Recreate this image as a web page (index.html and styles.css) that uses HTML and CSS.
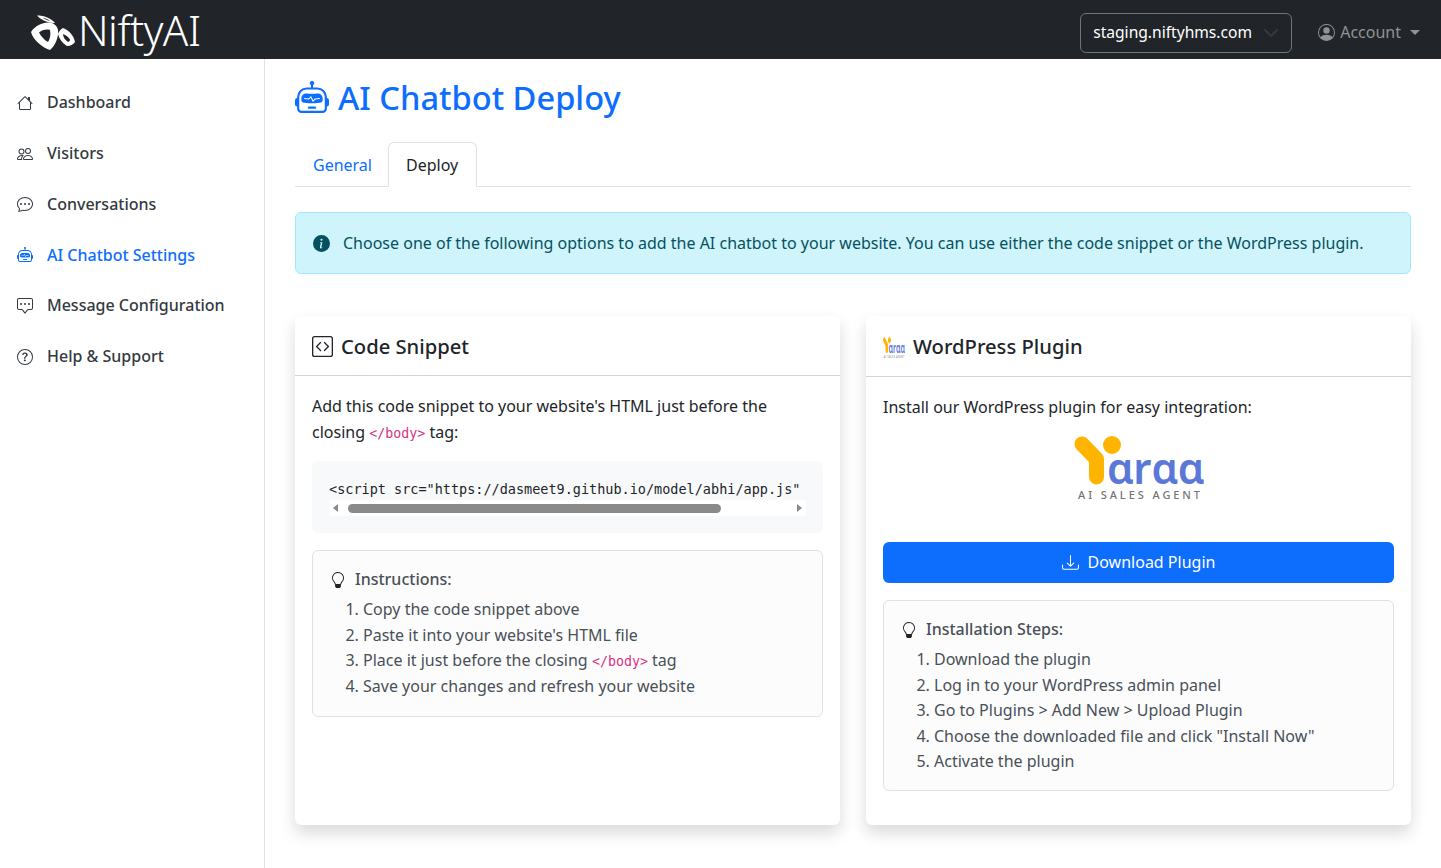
FILE: index.html
```html
<!DOCTYPE html>
<html>
<head>
    <title>AI Chatbot Deploy</title>
    <link rel="stylesheet" href="styles.css">
</head>
<body>
    <svg class="defs" width="0" height="0">
        <symbol id="i-robot" viewBox="0 0 16 16">
            <path d="M6 12.5a.5.5 0 0 1 .5-.5h3a.5.5 0 0 1 0 1h-3a.5.5 0 0 1-.5-.5ZM3 8.062C3 6.76 4.235 5.765 5.53 5.886a26.58 26.58 0 0 0 4.94 0C11.765 5.765 13 6.76 13 8.062v1.157a.933.933 0 0 1-.765.935c-.845.147-2.34.346-4.235.346-1.895 0-3.39-.2-4.235-.346A.933.933 0 0 1 3 9.219V8.062Zm4.542-.827a.25.25 0 0 0-.217.068l-.92.9a24.767 24.767 0 0 1-1.871-.183.25.25 0 0 0-.068.495c.55.076 1.232.149 2.02.193a.25.25 0 0 0 .189-.071l.754-.736.847 1.71a.25.25 0 0 0 .404.062l.932-.97a25.286 25.286 0 0 0 1.922-.188.25.25 0 0 0-.068-.495c-.538.074-1.207.145-1.98.189a.25.25 0 0 0-.166.076l-.754.785-.842-1.7a.25.25 0 0 0-.182-.135Z"/>
            <path d="M8.5 1.866a1 1 0 1 0-1 0V3h-2A4.5 4.5 0 0 0 1 7.5V8a1 1 0 0 0-1 1v2a1 1 0 0 0 1 1v1a2 2 0 0 0 2 2h10a2 2 0 0 0 2-2v-1a1 1 0 0 0 1-1V9a1 1 0 0 0-1-1v-.5A4.5 4.5 0 0 0 10.5 3h-2V1.866ZM14 7.5V13a1 1 0 0 1-1 1H3a1 1 0 0 1-1-1V7.5A3.5 3.5 0 0 1 5.5 4h5A3.5 3.5 0 0 1 14 7.5Z"/>
        </symbol>
        <symbol id="i-bulb" viewBox="0 0 16 16">
            <path d="M2 6a6 6 0 1 1 10.174 4.31c-.203.196-.359.4-.453.619l-.762 1.769A.5.5 0 0 1 10.5 13a.5.5 0 0 1 0 1 .5.5 0 0 1 0 1l-.224.447a1 1 0 0 1-.894.553H6.618a1 1 0 0 1-.894-.553L5.5 15a.5.5 0 0 1 0-1 .5.5 0 0 1 0-1 .5.5 0 0 1-.46-.302l-.761-1.77a1.964 1.964 0 0 0-.453-.618A5.984 5.984 0 0 1 2 6zm6-5a5 5 0 0 0-3.479 8.592c.263.254.514.564.676.941L5.83 12h4.342l.632-1.467c.162-.377.413-.687.676-.941A5 5 0 0 0 8 1z"/>
        </symbol>
    </svg>

    <nav class="navbar">
        <a class="brand" href="#">
            <svg class="brand-mark" viewBox="0 0 46 36">
                <path fill="#fff" fill-rule="evenodd" d="M1 17C5 11 12 7.500 18 7.500C23 7.500 27 10 28 15C29 22 25 31 20 35C13 33 3 25 1 17ZM9 17.500C11 21 14 25 18 27C20 24 21 19 20 15C16 14 12 15 9 17.500Z"/>
                <path fill="#fff" fill-rule="evenodd" d="M7 .500C14 .500 21 3 25 8C19 8 12 6 7 .500ZM13 2.800C15 4.500 18 5.600 20 6C18 4.400 15.500 3.200 13 2.800Z"/>
                <path fill="#fff" fill-rule="evenodd" d="M33 13C39 15 44 21 45 27C43 30 39 31.500 37 31C32 28 29 23 28 19C29 16 31 14 33 13ZM33 19C33 22 35 25 38 27C39.500 26.500 40 25.500 40 24.500C38.500 22 36 20 33 19Z"/>
            </svg>
            <span class="brand-name">NiftyAI</span>
        </a>
        <div class="nav-right">
            <div class="site-select">
                <span>staging.niftyhms.com</span>
                <svg class="select-arrow" viewBox="0 0 16 16"><path d="m2 5 6 6 6-6"/></svg>
            </div>
            <div class="account">
                <svg class="icon" viewBox="0 0 16 16"><path d="M11 6a3 3 0 1 1-6 0 3 3 0 0 1 6 0z"/><path fill-rule="evenodd" d="M0 8a8 8 0 1 1 16 0A8 8 0 0 1 0 8zm8-7a7 7 0 0 0-5.468 11.37C3.242 11.226 4.805 10 8 10s4.757 1.225 5.468 2.37A7 7 0 0 0 8 1z"/></svg>
                <span>Account</span>
                <i class="caret"></i>
            </div>
        </div>
    </nav>

    <div class="layout">
        <aside class="sidebar">
            <a class="side-link" href="#">
                <svg class="icon" viewBox="0 0 16 16"><path d="M8.707 1.5a1 1 0 0 0-1.414 0L.646 8.146a.5.5 0 0 0 .708.708L2 8.207V13.500A1.500 1.500 0 0 0 3.500 15h9a1.500 1.500 0 0 0 1.500-1.500V8.207l.646.647a.5.5 0 0 0 .708-.708L13 5.793V2.500a.5.5 0 0 0-.5-.5h-1a.5.5 0 0 0-.5.5v1.293L8.707 1.500ZM13 7.207V13.500a.5.5 0 0 1-.5.5h-9a.5.5 0 0 1-.5-.5V7.207l5-5 5 5Z"/></svg>
                Dashboard
            </a>
            <a class="side-link" href="#">
                <svg class="icon" viewBox="0 0 16 16"><path d="M15 14s1 0 1-1-1-4-5-4-5 3-5 4 1 1 1 1h8Zm-7.978-1A.261.261 0 0 1 7 12.996c.001-.264.167-1.030.76-1.720C8.312 10.629 9.282 10 11 10c1.717 0 2.687.630 3.240 1.276.593.690.758 1.457.760 1.720l-.008.002a.274.274 0 0 1-.014.002H7.022ZM11 7a2 2 0 1 0 0-4 2 2 0 0 0 0 4Zm3-2a3 3 0 1 1-6 0 3 3 0 0 1 6 0ZM6.936 9.280a5.880 5.880 0 0 0-1.230-.247A7.350 7.350 0 0 0 5 9c-4 0-5 3-5 4 0 .667.333 1 1 1h4.216A2.238 2.238 0 0 1 5 13c0-1.010.377-2.042 1.090-2.904.243-.294.526-.569.846-.816ZM4.920 10A5.493 5.493 0 0 0 4 13H1c0-.260.164-1.030.760-1.724.545-.636 1.492-1.256 3.160-1.275ZM1.500 5.500a3 3 0 1 1 6 0 3 3 0 0 1-6 0Zm3-2a2 2 0 1 0 0 4 2 2 0 0 0 0-4Z"/></svg>
                Visitors
            </a>
            <a class="side-link" href="#">
                <svg class="icon" viewBox="0 0 16 16"><path d="M5 8a1 1 0 1 1-2 0 1 1 0 0 1 2 0zm4 0a1 1 0 1 1-2 0 1 1 0 0 1 2 0zm3 1a1 1 0 1 0 0-2 1 1 0 0 0 0 2z"/><path d="m2.165 15.803.020-.004c1.830-.363 2.948-.842 3.468-1.105A9.060 9.060 0 0 0 8 15c4.418 0 8-3.134 8-7s-3.582-7-8-7-8 3.134-8 7c0 1.760.743 3.370 1.970 4.600a10.437 10.437 0 0 1-.524 2.318l-.003.011a10.722 10.722 0 0 1-.244.637c-.079.186.074.394.273.362a21.673 21.673 0 0 0 .693-.125zm.8-3.108a1 1 0 0 0-.287-.801C1.618 10.830 1 9.468 1 8c0-3.192 3.004-6 7-6s7 2.808 7 6c0 3.193-3.004 6-7 6a8.060 8.060 0 0 1-2.088-.272 1 1 0 0 0-.711.074c-.387.196-1.240.570-2.634.893a10.970 10.970 0 0 0 .398-2z"/></svg>
                Conversations
            </a>
            <a class="side-link active" href="#">
                <svg class="icon" viewBox="0 0 16 16"><use href="#i-robot"/></svg>
                AI Chatbot Settings
            </a>
            <a class="side-link" href="#">
                <svg class="icon" viewBox="0 0 16 16"><path d="M14 1a1 1 0 0 1 1 1v8a1 1 0 0 1-1 1h-2.500a2 2 0 0 0-1.600.800L8 14.333 6.100 11.800a2 2 0 0 0-1.600-.800H2a1 1 0 0 1-1-1V2a1 1 0 0 1 1-1h12zM2 0a2 2 0 0 0-2 2v8a2 2 0 0 0 2 2h2.500a1 1 0 0 1 .800.400l1.900 2.533a1 1 0 0 0 1.600 0l1.900-2.533a1 1 0 0 1 .800-.400H14a2 2 0 0 0 2-2V2a2 2 0 0 0-2-2H2z"/><path d="M5 6a1 1 0 1 1-2 0 1 1 0 0 1 2 0zm4 0a1 1 0 1 1-2 0 1 1 0 0 1 2 0zm4 0a1 1 0 1 1-2 0 1 1 0 0 1 2 0z"/></svg>
                Message Configuration
            </a>
            <a class="side-link" href="#">
                <svg class="icon" viewBox="0 0 16 16"><path d="M8 15A7 7 0 1 1 8 1a7 7 0 0 1 0 14zm0 1A8 8 0 1 0 8 0a8 8 0 0 0 0 16z"/><path d="M5.255 5.786a.237.237 0 0 0 .241.247h.825c.138 0 .248-.113.266-.250.090-.656.540-1.134 1.342-1.134.686 0 1.314.343 1.314 1.168 0 .635-.374.927-.965 1.371-.673.489-1.206 1.060-1.168 1.987l.003.217a.250.250 0 0 0 .250.246h.811a.250.250 0 0 0 .250-.250v-.105c0-.718.273-.927 1.010-1.486.609-.463 1.244-.977 1.244-2.056 0-1.511-1.276-2.241-2.673-2.241-1.267 0-2.655.590-2.750 2.286zm1.557 5.763c0 .533.425.927 1.010.927.609 0 1.028-.394 1.028-.927 0-.552-.420-.940-1.029-.940-.584 0-1.009.388-1.009.940z"/></svg>
                Help &amp; Support
            </a>
        </aside>

        <main class="content">
            <h1 class="page-title">
                <svg class="title-icon" viewBox="0 0 16 16"><use href="#i-robot"/></svg>
                AI Chatbot Deploy
            </h1>

            <div class="tabs">
                <a class="tab" href="#">General</a>
                <a class="tab active" href="#">Deploy</a>
            </div>

            <div class="alert">
                <svg class="icon alert-icon" viewBox="0 0 16 16"><path d="M8 16A8 8 0 1 0 8 0a8 8 0 0 0 0 16zm.930-9.412-1 4.705c-.070.340.029.533.304.533.194 0 .487-.070.686-.246l-.088.416c-.287.346-.920.598-1.465.598-.703 0-1.002-.422-.808-1.319l.738-3.468c.064-.293.006-.399-.287-.470l-.451-.081.082-.381 2.290-.287zM8 5.500a1 1 0 1 1 0-2 1 1 0 0 1 0 2z"/></svg>
                <span class="alert-text">Choose one of the following options to add the AI chatbot to your website. You can use either the code snippet or the WordPress plugin.</span>
            </div>

            <div class="cards">
                <section class="card">
                    <header class="card-head head-snippet">
                        <svg class="head-icon" viewBox="0 0 16 16"><path d="M14 1a1 1 0 0 1 1 1v12a1 1 0 0 1-1 1H2a1 1 0 0 1-1-1V2a1 1 0 0 1 1-1h12zM2 0a2 2 0 0 0-2 2v12a2 2 0 0 0 2 2h12a2 2 0 0 0 2-2V2a2 2 0 0 0-2-2H2z"/><path d="M6.854 4.646a.500.500 0 0 1 0 .708L4.207 8l2.647 2.646a.500.500 0 0 1-.708.708l-3-3a.500.500 0 0 1 0-.708l3-3a.500.500 0 0 1 .708 0zm2.292 0a.500.500 0 0 0 0 .708L11.793 8l-2.647 2.646a.500.500 0 0 0 .708.708l3-3a.500.500 0 0 0 0-.708l-3-3a.500.500 0 0 0-.708 0z"/></svg>
                        <h2>Code Snippet</h2>
                    </header>
                    <div class="card-body">
                        <p class="intro">Add this code snippet to your website's HTML just before the closing <code>&lt;/body&gt;</code> tag:</p>
                        <div class="code-box">
                            <pre class="code-line">&lt;script src="https://dasmeet9.github.io/model/abhi/app.js"</pre>
                            <div class="scroll-bar">
                                <i class="arrow-left"></i>
                                <div class="scroll-track"><div class="scroll-thumb"></div></div>
                                <i class="arrow-right"></i>
                            </div>
                        </div>
                        <div class="note">
                            <div class="note-title">
                                <svg class="bulb" viewBox="0 0 16 16"><use href="#i-bulb"/></svg>
                                Instructions:
                            </div>
                            <ol>
                                <li>Copy the code snippet above</li>
                                <li>Paste it into your website's HTML file</li>
                                <li>Place it just before the closing <code>&lt;/body&gt;</code> tag</li>
                                <li>Save your changes and refresh your website</li>
                            </ol>
                        </div>
                    </div>
                </section>

                <section class="card">
                    <header class="card-head">
                        <svg class="head-logo" viewBox="0 0 130 67" preserveAspectRatio="none">
                            <path class="y-stroke" d="M8 9 L22.5 24 V42"/>
                            <circle class="y-dot" cx="38" cy="10" r="9"/>
                            <text class="y-word" x="33" y="49" textLength="97" lengthAdjust="spacingAndGlyphs">ɑrɑɑ</text>
                            <text class="y-tag" x="4" y="64" textLength="122">AI SALES AGENT</text>
                        </svg>
                        <h2>WordPress Plugin</h2>
                    </header>
                    <div class="card-body plugin-body">
                        <p class="intro">Install our WordPress plugin for easy integration:</p>
                        <svg class="plugin-logo" viewBox="0 0 130 67">
                            <path class="y-stroke" d="M8 9 L22.5 24 V42"/>
                            <circle class="y-dot" cx="38" cy="10" r="9"/>
                            <text class="y-word" x="33" y="49" textLength="97" lengthAdjust="spacingAndGlyphs">ɑrɑɑ</text>
                            <text class="y-tag" x="4" y="64" textLength="122">AI SALES AGENT</text>
                        </svg>
                        <a class="btn-download" href="#">
                            <svg class="icon" viewBox="0 0 16 16"><path d="M.5 9.900a.500.500 0 0 1 .500.500v2.500a1 1 0 0 0 1 1h12a1 1 0 0 0 1-1v-2.500a.500.500 0 0 1 1 0v2.500a2 2 0 0 1-2 2H2a2 2 0 0 1-2-2v-2.500a.500.500 0 0 1 .500-.500z"/><path d="M7.646 11.854a.500.500 0 0 0 .708 0l3-3a.500.500 0 0 0-.708-.708L8.500 10.293V1.500a.500.500 0 0 0-1 0v8.793L5.354 8.146a.500.500 0 1 0-.708.708l3 3z"/></svg>
                            Download Plugin
                        </a>
                        <div class="note">
                            <div class="note-title">
                                <svg class="bulb" viewBox="0 0 16 16"><use href="#i-bulb"/></svg>
                                Installation Steps:
                            </div>
                            <ol>
                                <li>Download the plugin</li>
                                <li>Log in to your WordPress admin panel</li>
                                <li>Go to Plugins &gt; Add New &gt; Upload Plugin</li>
                                <li>Choose the downloaded file and click "Install Now"</li>
                                <li>Activate the plugin</li>
                            </ol>
                        </div>
                    </div>
                </section>
            </div>
        </main>
    </div>
</body>
</html>
```

FILE: styles.css
```css
* {
    box-sizing: border-box;
}

body {
    font-family: "Noto Sans", "Open Sans", sans-serif;
    font-size: 16px;
    line-height: 25.5px;
    color: #212529;
    background-color: #fff;
    margin: 0;
    height: 868px;
    overflow: hidden;
}

a {
    text-decoration: none;
}

.defs {
    position: absolute;
}

.icon {
    width: 16px;
    height: 16px;
    fill: currentColor;
    flex-shrink: 0;
}

/* top bar */
.navbar {
    height: 59px;
    background-color: #212529;
    display: flex;
    align-items: center;
    justify-content: space-between;
    padding: 0 21px 0 30px;
}

.brand {
    display: flex;
    align-items: center;
    gap: 2px;
    color: #fff;
}

.brand-mark {
    width: 46px;
    height: 36px;
    margin-top: 6px;
}

.brand-name {
    font-size: 42px;
    font-weight: 300;
    line-height: 48px;
    letter-spacing: -0.5px;
}

.nav-right {
    display: flex;
    align-items: center;
    gap: 26px;
    margin-top: 6px;
}

.site-select {
    width: 212px;
    height: 40px;
    border: 1px solid #6c757d;
    border-radius: 6px;
    color: #fff;
    font-size: 15.6px;
    display: flex;
    align-items: center;
    justify-content: space-between;
    padding: 0 12px;
}

.select-arrow {
    width: 16px;
    height: 16px;
    fill: none;
    stroke: #343a40;
    stroke-width: 2;
    stroke-linecap: round;
    stroke-linejoin: round;
}

.account {
    display: flex;
    align-items: center;
    color: #8f9296;
    font-size: 16px;
}

.account .icon {
    width: 17px;
    height: 17px;
    margin-right: 5px;
}

.caret {
    width: 0;
    height: 0;
    border-top: 5px solid #8f9296;
    border-left: 5px solid transparent;
    border-right: 5px solid transparent;
    margin-left: 9px;
}

/* sidebar */
.layout {
    display: flex;
    height: 809px;
}

.sidebar {
    width: 265px;
    flex-shrink: 0;
    border-right: 1px solid #dee2e6;
    padding-top: 18.5px;
    display: flex;
    flex-direction: column;
}

.side-link {
    height: 50.8px;
    display: flex;
    align-items: center;
    gap: 14px;
    padding-left: 17px;
    color: #343a40;
    font-size: 16px;
    font-weight: 500;
}

.side-link.active {
    color: #0d6efd;
}

/* main area */
.content {
    flex: 1;
    padding: 18px 30px 0;
}

.page-title {
    display: flex;
    align-items: center;
    gap: 9px;
    margin: 0 0 24px;
    font-size: 32.6px;
    font-weight: 500;
    line-height: 41px;
    color: #0d6efd;
}

.title-icon {
    width: 34px;
    height: 34px;
    fill: currentColor;
}

.tabs {
    display: flex;
    height: 45px;
    border-bottom: 1px solid #dee2e6;
    margin-bottom: 25px;
}

.tab {
    height: 45px;
    padding: 9.5px 17px;
    border: 1px solid transparent;
    border-radius: 6px 6px 0 0;
    color: #0d6efd;
    margin-right: -2px;
}

.tab.active {
    color: #212529;
    background-color: #fff;
    border-color: #dee2e6 #dee2e6 #fff;
    padding-right: 18px;
}

.alert {
    height: 62px;
    background-color: #cff4fc;
    border: 1px solid #9eeaf9;
    border-radius: 6px;
    color: #055160;
    display: flex;
    align-items: center;
    gap: 13px;
    padding: 0 17px;
    margin-bottom: 42px;
}

.alert-icon {
    width: 17px;
    height: 17px;
}

.alert-text {
    margin-top: 2px;
}

/* cards */
.cards {
    display: grid;
    grid-template-columns: 545px 545px;
    gap: 26px;
}

.card {
    background-color: #fff;
    border-radius: 6px;
    box-shadow: 0 8px 16px rgba(0, 0, 0, 0.15);
}

.card-head {
    display: flex;
    align-items: center;
    gap: 8px;
    padding: 17px;
    border-bottom: 1px solid #d5d5d5;
}

.head-snippet {
    padding: 18px 17px 16px;
}

.card-head h2 {
    margin: 0;
    font-size: 20.2px;
    font-weight: 500;
    line-height: 25px;
}

.head-icon {
    width: 21px;
    height: 21px;
    fill: #212529;
}

.head-logo {
    width: 22px;
    height: 22px;
    margin-top: 4px;
}

.card-body {
    padding: 17px;
}

.plugin-body {
    padding-bottom: 34px;
}

.intro {
    margin: 0 0 16px;
    line-height: 26px;
}

code {
    font-family: "DejaVu Sans Mono", "Liberation Mono", monospace;
    font-size: 13.3px;
    line-height: 1;
    color: #d63384;
}

.code-box {
    background-color: #f8f9fa;
    border-radius: 6px;
    padding: 17px;
    margin-bottom: 17px;
}

.code-line {
    margin: 0;
    height: 22px;
    overflow: hidden;
    font-family: "DejaVu Sans Mono", "Liberation Mono", monospace;
    font-size: 13.500px;
    line-height: 22px;
    color: #212529;
}

.scroll-bar {
    height: 16px;
    background-color: #fff;
    display: flex;
    align-items: center;
    padding: 0 4px;
}

.arrow-left,
.arrow-right {
    width: 0;
    height: 0;
    border-top: 4.500px solid transparent;
    border-bottom: 4.500px solid transparent;
}

.arrow-left {
    border-right: 5px solid #8a8a8a;
}

.arrow-right {
    border-left: 5px solid #8a8a8a;
}

.scroll-track {
    flex: 1;
    padding: 0 10px;
}

.scroll-thumb {
    width: 373px;
    height: 9px;
    border-radius: 5px;
    background-color: #8a8a8a;
}

.note {
    background-color: #fcfcfd;
    border: 1px solid #dee2e6;
    border-radius: 6px;
    padding: 17px;
}

.note-title {
    display: flex;
    align-items: center;
    gap: 9px;
    height: 23px;
    margin-bottom: 6px;
    font-weight: 500;
    color: #495057;
}

.bulb {
    width: 16px;
    height: 16px;
    fill: #212529;
}

.note ol {
    margin: 0;
    padding-left: 33px;
    color: #495057;
}

/* plugin card */
.plugin-body .note {
    padding-bottom: 15.5px;
}

.plugin-logo {
    display: block;
    width: 130px;
    height: 67px;
    margin: -1px auto 40px;
}

.y-stroke {
    fill: none;
    stroke: #ffb400;
    stroke-width: 15;
    stroke-linecap: round;
    stroke-linejoin: round;
}

.y-dot {
    fill: #ffb400;
}

.y-word {
    font-family: "Noto Sans", sans-serif;
    font-size: 44px;
    font-weight: 600;
    fill: #5a78d8;
}

.y-tag {
    font-family: "Noto Sans", sans-serif;
    font-size: 11px;
    font-weight: 500;
    fill: #757575;
}

.btn-download {
    height: 41px;
    background-color: #0d6efd;
    border-radius: 6px;
    color: #fff;
    display: flex;
    align-items: center;
    justify-content: center;
    gap: 9px;
    margin-bottom: 17px;
}

.btn-download .icon {
    width: 17px;
    height: 17px;
}
```
